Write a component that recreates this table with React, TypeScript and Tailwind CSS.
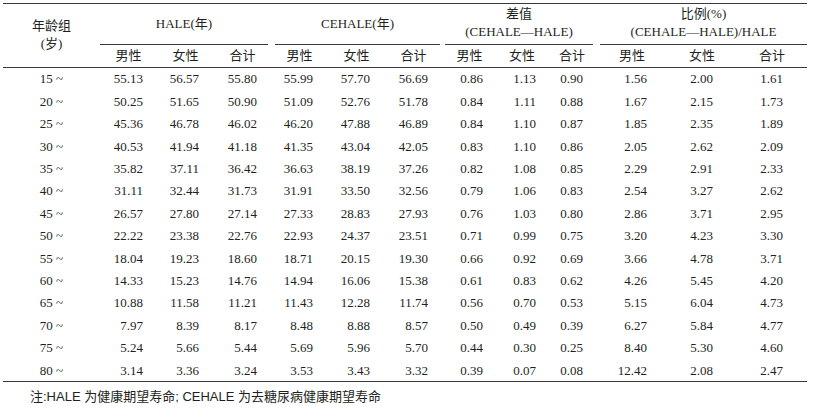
import React from 'react';

const rows: [string, string[]][] = [
  ['15 ~', ['55.13', '56.57', '55.80', '55.99', '57.70', '56.69', '0.86', '1.13', '0.90', '1.56', '2.00', '1.61']],
  ['20 ~', ['50.25', '51.65', '50.90', '51.09', '52.76', '51.78', '0.84', '1.11', '0.88', '1.67', '2.15', '1.73']],
  ['25 ~', ['45.36', '46.78', '46.02', '46.20', '47.88', '46.89', '0.84', '1.10', '0.87', '1.85', '2.35', '1.89']],
  ['30 ~', ['40.53', '41.94', '41.18', '41.35', '43.04', '42.05', '0.83', '1.10', '0.86', '2.05', '2.62', '2.09']],
  ['35 ~', ['35.82', '37.11', '36.42', '36.63', '38.19', '37.26', '0.82', '1.08', '0.85', '2.29', '2.91', '2.33']],
  ['40 ~', ['31.11', '32.44', '31.73', '31.91', '33.50', '32.56', '0.79', '1.06', '0.83', '2.54', '3.27', '2.62']],
  ['45 ~', ['26.57', '27.80', '27.14', '27.33', '28.83', '27.93', '0.76', '1.03', '0.80', '2.86', '3.71', '2.95']],
  ['50 ~', ['22.22', '23.38', '22.76', '22.93', '24.37', '23.51', '0.71', '0.99', '0.75', '3.20', '4.23', '3.30']],
  ['55 ~', ['18.04', '19.23', '18.60', '18.71', '20.15', '19.30', '0.66', '0.92', '0.69', '3.66', '4.78', '3.71']],
  ['60 ~', ['14.33', '15.23', '14.76', '14.94', '16.06', '15.38', '0.61', '0.83', '0.62', '4.26', '5.45', '4.20']],
  ['65 ~', ['10.88', '11.58', '11.21', '11.43', '12.28', '11.74', '0.56', '0.70', '0.53', '5.15', '6.04', '4.73']],
  ['70 ~', ['7.97', '8.39', '8.17', '8.48', '8.88', '8.57', '0.50', '0.49', '0.39', '6.27', '5.84', '4.77']],
  ['75 ~', ['5.24', '5.66', '5.44', '5.69', '5.96', '5.70', '0.44', '0.30', '0.25', '8.40', '5.30', '4.60']],
  ['80 ~', ['3.14', '3.36', '3.24', '3.53', '3.43', '3.32', '0.39', '0.07', '0.08', '12.42', '2.08', '2.47']],
];

// right padding per value column so the numbers line up like the print
const pad = [
  'pr-[14px]', 'pr-[15px]', 'pr-[14px]',
  'pr-[15px]', 'pr-[15px]', 'pr-[14px]',
  'pr-[14px]', 'pr-[11px]', 'pr-[14px]',
  'pr-[20px]', 'pr-[24px]', 'pr-[24px]',
];

const cols =
  'grid grid-cols-[97px_57px_57px_57px_57px_57px_57px_55px_50px_50px_70px_70px_70px]';

const sub = ['男性', '女性', '合计'];

const App: React.FC = () => {
  return (
    <div
      className="w-[815px] h-[409px] bg-white pt-[3px] pl-[3px] text-[13px] text-[#231f20]"
      style={{ fontFamily: '"Liberation Serif", "Noto Sans CJK SC", serif' }}
    >
      <div className="w-[804px] border-t border-[#3a3a3a]">
        {/* header */}
        <div className={`${cols} border-b border-[#3a3a3a]`}>
          <div className="row-span-2 flex flex-col items-center justify-center leading-[18px] pb-[1px]">
            <span>年龄组</span>
            <span>(岁)</span>
          </div>
          <div className="col-span-3 h-[41px] flex items-center justify-center mr-[3px] border-b border-[#3a3a3a]">
            HALE(年)
          </div>
          <div className="col-span-3 h-[41px] flex items-center justify-center ml-[4px] mr-[2px] border-b border-[#3a3a3a]">
            CEHALE(年)
          </div>
          <div className="col-span-3 h-[41px] flex flex-col items-center justify-center leading-[18px] ml-[3px] mr-[4px] border-b border-[#3a3a3a] pb-[2px]">
            <span>差值</span>
            <span>(CEHALE—HALE)</span>
          </div>
          <div className="col-span-3 h-[41px] flex flex-col items-center justify-center leading-[18px] ml-[3px] border-b border-[#3a3a3a] pb-[2px]">
            <span>比例(%)</span>
            <span>(CEHALE—HALE)/HALE</span>
          </div>
          {[0, 1, 2, 3].map((g) =>
            sub.map((s) => (
              <div key={`${g}-${s}`} className="h-[22px] flex items-center justify-center">
                {s}
              </div>
            )),
          )}
        </div>

        {/* body */}
        <div className="border-b border-[#3a3a3a]">
          {rows.map(([age, vals]) => (
            <div key={age} className={`${cols} h-[22.4px] items-center`}>
              <div className="text-center">{age}</div>
              {vals.map((v, i) => (
                <div key={i} className={`text-right ${pad[i]}`}>
                  {v}
                </div>
              ))}
            </div>
          ))}
        </div>
      </div>

      <div
        className="pl-[27px] pt-[5px] text-[13px]"
        style={{ fontFamily: '"Liberation Sans", "Noto Sans CJK SC", sans-serif' }}
      >
        注:HALE 为健康期望寿命; CEHALE 为去糖尿病健康期望寿命
      </div>
    </div>
  );
};

export default App;
